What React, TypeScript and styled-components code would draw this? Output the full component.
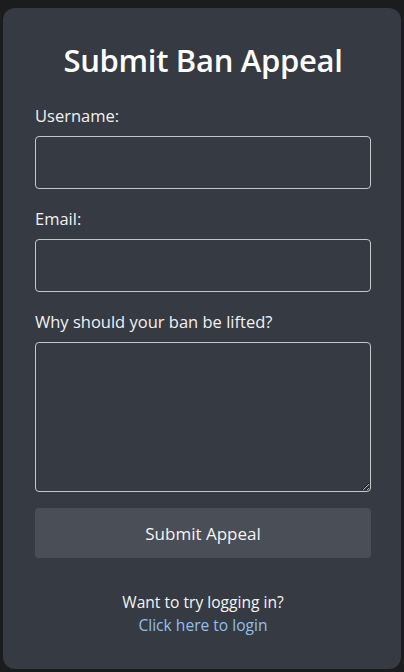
import React from "react";
import styled, { createGlobalStyle } from "styled-components";

const Global = createGlobalStyle`
  html, body { margin: 0; padding: 0; background: #1b1c1e; }
  body { font-family: "Open Sans", "Noto Sans", sans-serif; color: #f1f1f1; }
  * { box-sizing: border-box; }
`;

const Page = styled.div`
  width: 404px;
  height: 672px;
  padding: 8px 3px 3px 3px;
  display: flex;
`;

const Card = styled.form`
  flex: 1;
  background: #363a42;
  border-radius: 12px;
  padding: 33px 30px 32px 32px;
  display: flex;
  flex-direction: column;
  & > * { flex-shrink: 0; }
`;

const Title = styled.h1`
  margin: 0 0 25px;
  font-size: 31px;
  line-height: 38px;
  font-weight: 600;
  text-align: center;
  color: #ffffff;
  letter-spacing: -0.3px;
`;

const Field = styled.div`
  display: flex;
  flex-direction: column;
  gap: 8px;
  margin-bottom: 18px;
  & > * { flex-shrink: 0; }
`;

const Label = styled.label`
  font-size: 16.5px;
  line-height: 24px;
  color: #f1f1f1;
`;

const Input = styled.input`
  height: 53px;
  width: 100%;
  background: #363a42;
  border: 1px solid #c4c6ca;
  border-radius: 4px;
  color: #fff;
  font: inherit;
  padding: 0 10px;
  outline: none;
`;

const TextArea = styled.textarea`
  height: 150px;
  width: 100%;
  background: #363a42;
  border: 1px solid #c4c6ca;
  border-radius: 4px;
  color: #fff;
  font: inherit;
  padding: 8px 10px;
  outline: none;
  resize: vertical;
  display: block;
`;

const Button = styled.button`
  margin-top: -2px;
  height: 50px;
  width: 100%;
  border: none;
  border-radius: 4px;
  background: #4a4e56;
  color: #f4f4f4;
  font-family: inherit;
  font-size: 17px;
`;

const Footer = styled.div`
  margin-top: 33px;
  text-align: center;
  font-size: 15.6px;
  line-height: 23px;
  color: #f4f4f4;
`;

const Link = styled.a`
  display: block;
  color: #8ec0ee;
  text-decoration: none;
`;

export default function App() {
  return (
    <>
      <Global />
      <Page>
        <Card onSubmit={(e) => e.preventDefault()}>
          <Title>Submit Ban Appeal</Title>
          <Field>
            <Label htmlFor="u">Username:</Label>
            <Input id="u" type="text" />
          </Field>
          <Field>
            <Label htmlFor="e">Email:</Label>
            <Input id="e" type="email" />
          </Field>
          <Field>
            <Label htmlFor="r">Why should your ban be lifted?</Label>
            <TextArea id="r" />
          </Field>
          <Button type="submit">Submit Appeal</Button>
          <Footer>
            Want to try logging in?
            <Link href="#">Click here to login</Link>
          </Footer>
        </Card>
      </Page>
    </>
  );
}
